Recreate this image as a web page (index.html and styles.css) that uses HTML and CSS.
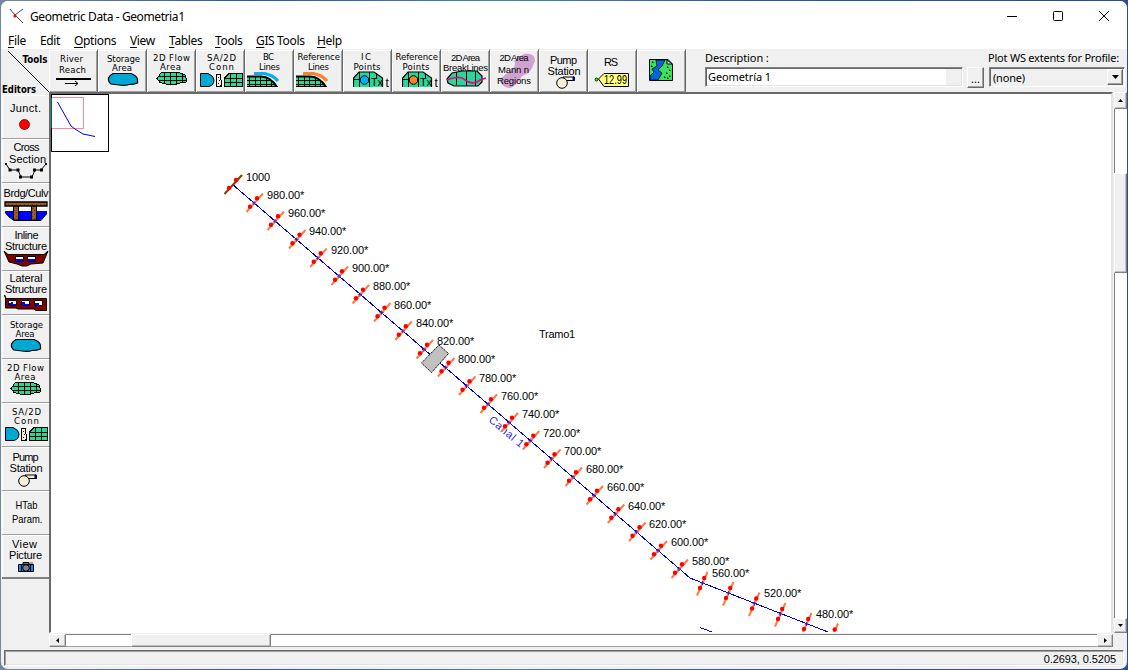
FILE: index.html
```html
<!DOCTYPE html>
<html lang="en">
<head>
<meta charset="utf-8">
<title>Geometric Data - Geometria1</title>
<link rel="stylesheet" href="styles.css">
</head>
<body>
<svg class="defs" width="0" height="0" aria-hidden="true">
  <defs>
    <pattern id="hatch" width="4" height="4" patternUnits="userSpaceOnUse"><rect width="4" height="4" fill="#a05a28"/><path d="M0 0h1v1H0zM2 2h1v1H2z" fill="#40501c"/></pattern>
    <symbol id="blob" viewBox="0 0 32 15" width="32" height="15"><path d="M6 1.5H24Q30.5 4 30.5 8V11Q27 12.5 22 12.5Q18 14 12 13L4 12Q1 10 1.5 6Q3 3 6 1.5Z" fill="#00a9d4" stroke="#000" stroke-width="1.2"/></symbol>
    <symbol id="mesh" viewBox="0 0 32 15" width="32" height="15"><g shape-rendering="crispEdges"><path d="M5 2L10 1H22L29 4L30.500 8V11L24 12L19 13.500H12L4 11.500L1 7.500Z" fill="#26d99a" stroke="#000"/><path d="M2 5.500H29M2 9.500H30M8.500 1V12M14.500 1V13M20.500 1V13M26.500 3V11" stroke="#000" fill="none"/></g></symbol>
    <symbol id="conn" viewBox="0 0 43 15" width="43" height="15"><path d="M.5.5H8Q14 3 14 7Q14 12 9 13.500H.5Z" fill="#00a9d4" stroke="#000"/><g shape-rendering="crispEdges"><path d="M16.500 1.500H20.500V6L21.500 8V13.500H16.500Z" fill="#f5efd8" stroke="#000"/><path d="M18 4.500h1M19 7.500h1M18 10.500h1M20 12.500h1" stroke="#000"/><path d="M24.500 5L29 .5H42V13.500H24.500Z" fill="#26d99a" stroke="#000"/><path d="M24 5.500H42M24 9.500H42M30.500 0V13M36.500 0V13" stroke="#000"/></g></symbol>
    <symbol id="bank" viewBox="0 0 34 16" width="34" height="16"><path d="M0 4.500H16Q25 6 30.500 14.500H0Z" fill="#26d99a"/><path d="M0 4.500H14Q24 5 29.500 14.500" fill="none" stroke="#000" stroke-width="2"/><path d="M0 8.500H24M0 12.500H29M2.500 4V15M8.500 4V15M13.500 4V15M19.500 5V15M24.500 9V15M0 14.500H31" stroke="#000" shape-rendering="crispEdges"/><path d="M7 1.500H17Q26 3 31 9" fill="none" stroke="currentColor" stroke-width="3.200"/></symbol>
    <symbol id="dome" viewBox="0 0 38 18" width="38" height="18"><path d="M.8 16V7L6 1H21L29 7V16Z" fill="#26d99a"/><path d="M.5 16V7L6 1H21L29.500 7V16" fill="none" stroke="#000" stroke-width="1.200"/><path d="M6.500 1V16M16.500 1V16M23.500 2V7M1 8.500H17" stroke="#000" shape-rendering="crispEdges"/><circle cx="11.500" cy="9" r="4.300" fill="currentColor" stroke="#000"/><text x="18" y="15" class="lbl" font-size="11" textLength="12">Tx</text><text x="32.500" y="16" class="lbl" font-size="12">t</text></symbol>
    <symbol id="pump" viewBox="0 0 20 13" width="20" height="13"><path d="M7 1H18V4.500H9Z" fill="#f5efd8" stroke="#000"/><path d="M17 1h1.500v3.500H17z" fill="#00c" stroke="#000060"/><circle cx="6" cy="7" r="5.300" fill="#f5efd8" stroke="#000"/></symbol>
    <symbol id="xs" viewBox="-10 -12 20 24" width="20" height="24" overflow="visible"><path d="M-7.500 9L9-9.500" stroke="#ff7a40" stroke-width="2"/><circle cx="-4" cy="3.700" r="2.200" fill="#f00"/><circle cx="3" cy="-4.700" r="2.200" fill="#f00"/><path d="M-2 0H2M0-2V2" stroke="#2010d0" stroke-width=".8"/></symbol>
    <symbol id="xt" viewBox="-10 -12 20 24" width="20" height="24" overflow="visible"><path d="M-5.500 12.500L5-11" stroke="#ff7a40" stroke-width="2"/><circle cx="-2.500" cy="5" r="2.200" fill="#f00"/><circle cx="1.700" cy="-5" r="2.200" fill="#f00"/><path d="M-2 0H2M0-2V2" stroke="#2010d0" stroke-width=".8"/></symbol>
  </defs>
</svg>

<div class="window">
  <header class="titlebar">
    <svg class="app-icon" width="16" height="16" viewBox="0 0 16 16"><path d="M1 1L6 7L14 15M14 1L6 7L5 8" fill="none" stroke="#444"/><circle cx="6" cy="8" r="1.600" fill="#f00"/></svg>
    <h1 class="title">Geometric Data - Geometria1</h1>
    <div class="win-controls">
      <svg width="12" height="12"><path d="M1 6.500H11" stroke="#000"/></svg>
      <svg width="12" height="12"><rect x="1.500" y="1.500" width="9" height="9" rx="1" fill="none" stroke="#000"/></svg>
      <svg width="12" height="12"><path d="M1 1L11 11M11 1L1 11" stroke="#000"/></svg>
    </div>
  </header>

  <nav class="menu">
    <span><u>F</u>ile</span><span>Edit</span><span><u>O</u>ptions</span><span><u>V</u>iew</span><span><u>T</u>ables</span><span><u>T</u>ools</span><span><u>G</u>IS Tools</span><span><u>H</u>elp</span>
  </nav>

  <section class="toolbar">
    <svg class="corner" viewBox="1 49 48 46" width="48" height="46"><path d="M8 51L49 92" stroke="#000"/><text x="22.500" y="63" textLength="25" class="bold" lengthAdjust="spacingAndGlyphs">Tools</text><text x="2" y="93" textLength="34" class="bold" lengthAdjust="spacingAndGlyphs">Editors</text></svg>
    <div class="tools">
      <button class="tool"><svg viewBox="49 49 49 43"><text x="60" y="62" textLength="23">River</text><text x="59" y="73" textLength="27">Reach</text><path d="M56 79H91" stroke="#000" stroke-width="2"/><path d="M65 83.500H78M75 81L78 83.500L75 86" stroke="#000" fill="none"/></svg></button>
      <button class="tool"><svg viewBox="98 49 49 43"><text x="107" y="61.500" textLength="33">Storage</text><text x="112" y="70.500" textLength="20">Area</text><use href="#blob" x="107" y="72"/></svg></button>
      <button class="tool"><svg viewBox="147 49 49 43"><text x="153" y="61" textLength="37">2D Flow</text><text x="160" y="69.500" textLength="21">Area</text><use href="#mesh" x="156" y="71"/></svg></button>
      <button class="tool"><svg viewBox="196 49 49 43"><text x="207" y="61" textLength="29">SA/2D</text><text x="209" y="70" textLength="25">Conn</text><use href="#conn" x="200" y="73"/></svg></button>
      <button class="tool"><svg viewBox="245 49 49 43"><text x="263" y="60" textLength="11">BC</text><text x="259" y="70" textLength="21">Lines</text><use href="#bank" x="247" y="72" color="#00b0f8"/></svg></button>
      <button class="tool"><svg viewBox="294 49 49 43"><text x="297.500" y="60" textLength="42.500">Reference</text><text x="308" y="70" textLength="21">Lines</text><use href="#bank" x="296" y="72" color="#ff7f27"/></svg></button>
      <button class="tool"><svg viewBox="343 49 49 43"><text x="361" y="60" textLength="10">IC</text><text x="353.500" y="70" textLength="27">Points</text><use href="#dome" x="353" y="71" color="#00b0f8"/></svg></button>
      <button class="tool"><svg viewBox="392 49 49 43"><text x="395.500" y="60" textLength="42.500">Reference</text><text x="402.500" y="70" textLength="27">Points</text><use href="#dome" x="402" y="71" color="#ff7f27"/></svg></button>
      <button class="tool sans"><svg viewBox="441 49 49 43"><path d="M447 79L452 73L462 71H477L482 76V82L478 86H454L448 83Z" fill="#26d99a" stroke="#000" stroke-width="1.200"/><path d="M456.500 72V85M466.500 71V86M475.500 71V86" stroke="#000" shape-rendering="crispEdges"/><text x="451" y="61" textLength="29">2D Area</text><text x="443" y="70.500" textLength="45">BreakLines</text><path d="M447 80L453 78Q461 76 465 80Q473 86 480 80L486 78" fill="none" stroke="#f0047f" stroke-width="1.700"/></svg></button>
      <button class="tool sans"><svg viewBox="490 49 49 43"><path d="M524 54Q535 52 535 61L532 68Q530 73 522 76Q517 86 510 88Q503 88 499 80L506 74Q518 67 514 61Q518 57 524 54Z" fill="#d0a2d0"/><text x="499.500" y="61" textLength="29">2D Area</text><text x="498" y="72.500" textLength="31">Mann n</text><text x="497" y="84" textLength="34">Regions</text></svg></button>
      <button class="tool sans big"><svg viewBox="539 49 49 43"><text x="550" y="63.500" textLength="27">Pump</text><text x="547.500" y="74.500" textLength="33">Station</text><use href="#pump" x="556" y="76"/></svg></button>
      <button class="tool sans big"><svg viewBox="588 49 49 43"><text x="604" y="66" textLength="14">RS</text><path d="M598.500 79L604 73.500H628.500V86.500H604Z" fill="#ffff80" stroke="#000"/><circle cx="596.500" cy="79.500" r="1.500" fill="#2e4" stroke="#000" stroke-width=".8"/><text x="604" y="83.500" textLength="23" font-size="12" lengthAdjust="spacingAndGlyphs">12.99</text></svg></button>
      <button class="tool"><svg viewBox="637 49 49 43"><path d="M649.500 59.500H668L672.500 64V80.500H649.500Z" fill="#3de05c" stroke="#000"/><path d="M656 60H665L662 66L658 70L662 73L658 80H650V76L654 72L652 69L657 66Z" fill="#0067e0" stroke="#000" stroke-width=".8"/><path d="M667 60V64H672Z" fill="#fff" stroke="#000"/><path d="M652 62h1v1M651 66h1v1M667 67h1v1M669 70h1v1M666 73h1v1M664 77h1v1M669 76h1v1M667 78h1v1" stroke="#000"/></svg></button>
    </div>
    <div class="field desc">
      <label>Description :</label>
      <div class="row"><div class="input"><span>Geometría 1</span></div><button class="dots">...</button></div>
    </div>
    <div class="field profile">
      <label>Plot WS extents for Profile:</label>
      <div class="select"><span>(none)</span><i class="drop"><svg width="7" height="4"><path d="M0 0H7L3.500 4Z"/></svg></i></div>
    </div>
  </section>

  <main class="body">
    <aside class="editors">
      <button class="editor"><svg viewBox="2 95 47 44"><text x="10" y="112" textLength="31">Junct.</text><circle cx="24.500" cy="124.500" r="5" fill="#f00" stroke="#600" stroke-width=".8"/></svg></button>
      <button class="editor"><svg viewBox="2 139 47 44"><text x="13.500" y="151" textLength="26">Cross</text><text x="9" y="163" textLength="37">Section</text><path d="M6 164L10 170H18L21 177H32L35 170H41L46 164" fill="none" stroke="#000"/><path d="M5 163h2v2H5zM8.500 168.500h3v3h-3zM16.500 168.500h3v3h-3zM19 175.500h3v3h-3zM30 175.500h3v3h-3zM33 168.500h3v3h-3zM40 168.500h3v3h-3zM45 163h2v2h-2z"/></svg></button>
      <button class="editor"><svg viewBox="2 183 47 44"><text x="3.500" y="197" textLength="45">Brdg/Culv</text><path d="M6 206H46V211H6Z" fill="#fff"/><path d="M5 211H47V214L41 220H14L8 216L5 213Z" fill="#00f"/><path d="M5 212L9 217L14 220.500H41L47 213" fill="none" stroke="#000"/><path d="M13.500 206H18.500V220H13.500ZM31.500 206H36.500V220H31.500Z" fill="url(#hatch)" stroke="#000"/><path d="M5 202H47V206H5Z" fill="url(#hatch)" stroke="#000" stroke-width="1.300"/></svg></button>
      <button class="editor"><svg viewBox="2 227 47 44"><text x="14.500" y="238.500" textLength="24">Inline</text><text x="5" y="249.500" textLength="42">Structure</text><path d="M4 251L8 254.500H44L48 251L43 263L31 264L27 266H22L17 264L9 262Z" fill="#800000" stroke="#000"/><path d="M15.500 256.500h8v5h-8zM27.500 256.500h8v5h-8z" fill="#fff" stroke="#000"/><path d="M16 259h7v2.500h-7zM28 259h7v2.500h-7z" fill="#00f"/></svg></button>
      <button class="editor"><svg viewBox="2 271 47 44"><text x="9.500" y="282" textLength="33">Lateral</text><text x="5" y="292.500" textLength="42">Structure</text><path d="M4.500 295L6 298.500H46.500V310.500H36L34 309H18L16 308H5.500V298Z" fill="#800000" stroke="#000"/><path d="M8.500 300.500h8v5h-8zM21.500 300.500h8v5h-8zM34.500 300.500h8v5h-8z" fill="#fff" stroke="#000"/><path d="M9 303h2v-1h2v2h3v1H9zM22 302h3v2h4v1.500h-7zM35 303h4v2h3v.500h-7z" fill="#00f"/></svg></button>
      <button class="editor tah"><svg viewBox="2 315 47 44"><text x="10" y="327.500" textLength="33">Storage</text><text x="15.500" y="336.500" textLength="19">Area</text><use href="#blob" x="10" y="338"/></svg></button>
      <button class="editor tah"><svg viewBox="2 359 47 44"><text x="7" y="371" textLength="37">2D Flow</text><text x="14.500" y="379.500" textLength="21">Area</text><use href="#mesh" x="10" y="381"/></svg></button>
      <button class="editor tah"><svg viewBox="2 403 47 44"><text x="12" y="415" textLength="29">SA/2D</text><text x="14" y="424" textLength="25">Conn</text><use href="#conn" x="5" y="427"/></svg></button>
      <button class="editor"><svg viewBox="2 447 47 44"><text x="12.500" y="461" textLength="26">Pump</text><text x="9.500" y="472" textLength="33">Station</text><use href="#pump" x="18" y="474"/></svg></button>
      <button class="editor"><svg viewBox="2 491 47 44"><text x="15.500" y="509" textLength="22" lengthAdjust="spacingAndGlyphs">HTab</text><text x="12" y="523" textLength="30.500" lengthAdjust="spacingAndGlyphs">Param.</text></svg></button>
      <button class="editor"><svg viewBox="2 535 47 44"><text x="12" y="548" textLength="25">View</text><text x="9" y="559" textLength="33">Picture</text><path d="M18.500 564.500H33.500V571.500H18.500Z" fill="#1684ff" stroke="#000"/><path d="M23 562.500H29V564H23ZM21.500 564V571M30.500 564V571" fill="#ddd" stroke="#000"/><circle cx="26" cy="568" r="3.300" fill="#808080" stroke="#000"/><path d="M30 563h3" stroke="#f00"/></svg></button>
    </aside>

    <div class="view">
      <svg class="canvas" viewBox="51 94 1061 538" width="1061" height="538">
        <g fill="none" stroke="#0000e8" stroke-width="1" shape-rendering="crispEdges"><path d="M232 184L690 578L828 632M700 627.500L712 632"/></g>
        <text class="river" transform="translate(488 421) rotate(40)" textLength="42">Canal 1</text>
        <path d="M439 345L448.500 353.500L431.500 372.500L421.500 363Z" fill="#c0c0c0" stroke="#000" stroke-dasharray="1.500 .7"/>
        <path d="M224.500 194L242 175" stroke="#804000" stroke-width="2"/><circle cx="229" cy="188" r="2.200" fill="#f00"/><circle cx="236" cy="180" r="2.200" fill="#f00"/>
        <g>
          <use href="#xs" x="244" y="191"/><use href="#xs" x="265" y="209"/><use href="#xs" x="286.500" y="227.500"/><use href="#xs" x="307.700" y="246"/><use href="#xs" x="329" y="264"/><use href="#xs" x="350" y="282.500"/><use href="#xs" x="371.500" y="300.500"/><use href="#xs" x="392.800" y="319"/><use href="#xs" x="414" y="337.500"/><use href="#xs" x="435.500" y="355.500"/><use href="#xs" x="456.500" y="374"/><use href="#xs" x="478" y="392"/><use href="#xs" x="499" y="410.500"/><use href="#xs" x="520.300" y="428.500"/><use href="#xs" x="541.500" y="447"/><use href="#xs" x="563" y="465"/><use href="#xs" x="584" y="483.500"/><use href="#xs" x="605.300" y="502"/><use href="#xs" x="626.500" y="520"/><use href="#xs" x="648" y="538.500"/><use href="#xs" x="669" y="557"/>
          <use href="#xt" x="692.500" y="571"/><use href="#xt" x="718.500" y="581"/><use href="#xt" x="744.500" y="591.500"/><use href="#xt" x="770.500" y="602"/><use href="#xt" x="796.500" y="612"/><use href="#xt" x="823" y="622.500"/>
        </g>
        <g class="stations">
          <text x="246" y="181">1000</text><text x="267" y="199">980.00*</text><text x="288" y="217">960.00*</text><text x="309" y="235">940.00*</text><text x="331" y="254">920.00*</text><text x="352" y="272">900.00*</text><text x="373" y="290">880.00*</text><text x="394" y="309">860.00*</text><text x="416" y="327">840.00*</text><text x="437" y="345">820.00*</text><text x="458" y="363">800.00*</text><text x="479" y="382">780.00*</text><text x="501" y="400">760.00*</text><text x="522" y="418">740.00*</text><text x="543" y="437">720.00*</text><text x="564" y="455">700.00*</text><text x="586" y="473">680.00*</text><text x="607" y="491">660.00*</text><text x="628" y="510">640.00*</text><text x="649" y="528">620.00*</text><text x="671" y="546">600.00*</text><text x="692" y="565">580.00*</text><text x="712" y="577">560.00*</text><text x="764" y="597">520.00*</text><text x="816" y="618">480.00*</text>
          <text x="539" y="338" textLength="36">Tramo1</text>
        </g>
        <rect x="51.500" y="94.500" width="57" height="57" fill="#fff" stroke="#000"/>
        <path d="M52 97.500H83.500V128.500H52" fill="none" stroke="#f88"/><path d="M51.500 98V128" stroke="#006060"/>
        <path d="M57.500 102L71 126L75 129L83 134L88 135L95 136.500" fill="none" stroke="#0000e8"/>
      </svg>
    </div>

    <div class="vscroll"><i class="sb up"><svg width="5" height="3"><path d="M0 3L2.500 0L5 3Z"/></svg></i><i class="track a"></i><i class="sb vthumb"></i><i class="track b"></i><i class="sb down"><svg width="5" height="3"><path d="M0 0H5L2.500 3Z"/></svg></i></div>
    <div class="hscroll"><i class="sb left"><svg width="3" height="5"><path d="M3 0V5L0 2.500Z"/></svg></i><i class="track c"></i><i class="sb hthumb"></i><i class="track d"></i><i class="sb right"><svg width="3" height="5"><path d="M0 0V5L3 2.500Z"/></svg></i></div>
  </main>

  <footer class="status"><span>0.2693, 0.5205</span></footer>
</div>
</body>
</html>
```
FILE: styles.css
```css
* { box-sizing: border-box; }
body {
  margin: 0;
  width: 1128px;
  height: 670px;
  padding: 1px 1px 1px 1px;
  overflow: hidden;
  background: linear-gradient(90deg, #74879b 0, #74879b 4px, #2c55ac 250px, #3f86ac 500px, #2c55ac 750px, #2b4c90 1128px);
  font-family: "Noto Sans", sans-serif;
  color: #000;
}
.defs { position: absolute; }
.window {
  width: 1126px;
  height: 668px;
  display: flex;
  flex-direction: column;
  background: #f0f0f0;
  border-radius: 7px;
  overflow: hidden;
}
svg { display: block; }
button { margin: 0; padding: 0; font: inherit; color: inherit; background: #f0f0f0; border: 0; }
.titlebar { height: 30px; display: flex; align-items: center; padding: 0 17px 0 8px; background: #fff; }
.title { margin: 0 auto 0 5px; font-weight: 400; font-size: 12px; letter-spacing: -.4px; white-space: nowrap; }
.win-controls { display: flex; gap: 34px; }
.menu { height: 18px; display: flex; gap: 14px; padding-left: 7px; background: #fff; font-size: 12px; line-height: 20px; letter-spacing: -.35px; white-space: nowrap; }
.menu u { text-underline-offset: 2px; }
.menu span:nth-child(1) { width: 18px; }
.menu span:nth-child(2) { width: 20px; }
.menu span:nth-child(3) { width: 42px; }
.menu span:nth-child(4) { width: 25px; }
.menu span:nth-child(5) { width: 32px; }
.menu span:nth-child(6) { width: 27px; }
.menu span:nth-child(7) { width: 47px; }

.toolbar { height: 43px; display: flex; }
.corner { width: 48px; overflow: visible; }
.lbl { font-family: "Liberation Sans", Arial, sans-serif; fill: #000; }
.bold { font-family: "DejaVu Sans", sans-serif; font-weight: 700; font-size: 10.5px; }
.tools { display: flex; }
.tool { width: 49px; height: 43px; border-top: 1px solid #f0f0f0; box-shadow: inset 1px 1px #fff, inset -1px -1px #a0a0a0; border-right: 1px solid #696969; overflow: hidden; }
.tool svg { width: 49px; height: 43px; margin-top: -1px; font-family: "DejaVu Sans Condensed", "DejaVu Sans", sans-serif; font-stretch: condensed; font-size: 9.5px; }
.tool.sans svg { font-family: "Liberation Sans", Arial, sans-serif; font-stretch: normal; font-size: 9.5px; }
.tool.big svg { font-size: 11px; }
.field { font-size: 11px; line-height: 15px; white-space: nowrap; }
.field label { display: block; height: 17px; padding-top: 1px; letter-spacing: -.1px; }
.desc { width: 279px; margin-left: 19px; }
.profile { margin-left: 5px; }
.profile label { margin-left: -1px; letter-spacing: -.22px; }
.row { display: flex; justify-content: space-between; }
.input { width: 258px; height: 20px; margin-top: 1px; border: 1px solid; border-color: #808080 #fff #fff #808080; box-shadow: inset 1px 1px #696969, inset -1px -1px #e3e3e3; background: linear-gradient(90deg, #fff 240px, #f0f0f0 240px); padding: 1px 2px; line-height: 16px; letter-spacing: -.1px; }
.dots { width: 17px; height: 21px; margin-top: 1px; border: 1px solid; border-color: #fff #696969 #696969 #fff; box-shadow: inset -1px -1px #a0a0a0; line-height: 22px; }
.select { width: 136px; height: 20px; margin-top: 1px; display: flex; justify-content: space-between; border: 1px solid; border-color: #808080 #fff #fff #808080; box-shadow: inset 1px 1px #696969; padding: 1px 1px 1px 3px; line-height: 18px; letter-spacing: -.2px; }
.drop { width: 16px; height: 16px; display: flex; align-items: center; justify-content: center; border: 1px solid; border-color: #fff #696969 #696969 #fff; box-shadow: inset -1px -1px #a0a0a0; }

.body { height: 555px; display: grid; grid-template-columns: 48px 1064px 14px; grid-template-rows: 541px 14px; }
.editors { grid-row: 1 / 3; padding: 3px 0 0 1px; }
.editor { display: block; width: 48px; height: 44px; box-shadow: inset 1px 1px #fff; border-right: 1px solid #a0a0a0; border-bottom: 1px solid #a0a0a0; overflow: hidden; }
.editor:last-child { border-bottom: 2px solid #808080; }
.editor svg { width: 47px; height: 44px; font-family: "Liberation Sans", Arial, sans-serif; font-size: 11px; }
.editor.tah svg { font-family: "DejaVu Sans Condensed", "DejaVu Sans", sans-serif; font-stretch: condensed; font-size: 9.5px; }
.view { border: 1px solid; border-color: #808080 #fff #fff #808080; border-width: 2px 2px 1px 2px; border-top-color: #696969; border-left-color: #696969; border-right-color: #e3e3e3; background: #fff; width: 1064px; height: 541px; }
.canvas { overflow: hidden; }
.stations { font-family: "Liberation Sans", Arial, sans-serif; font-size: 11px; letter-spacing: -.1px; }
.river { font-family: "Liberation Sans", Arial, sans-serif; font-size: 11px; fill: #2418e8; }

.sb { display: flex; align-items: center; justify-content: center; background: #f0f0f0; border: 1px solid; border-color: #fff #808080 #808080 #fff; box-shadow: inset -1px -1px #c0c0c0; }
.track { display: block; background: #fff; }
.vscroll { display: flex; flex-direction: column; padding-left: 1px; }
.vscroll .track { border-left: 1px solid #808080; }
.up { height: 17px; }
.a { height: 64px; }
.vthumb { height: 100px; }
.b { flex: 1; }
.down { height: 15px; }
.hscroll { grid-column: 2; display: flex; padding-top: 1px; }
.hscroll .track { border-top: 1px solid #808080; border-bottom: 1px solid #a0a0a0; }
.left { width: 17px; }
.c { width: 65px; }
.hthumb { width: 140px; }
.d { flex: 1; }
.right { width: 16px; }
.status { margin: 3px 3px 0; height: 16px; border: 1px solid; border-color: #696969 #fff #fff #696969; box-shadow: inset 1px 1px #a0a0a0, inset -1px -1px #e3e3e3; display: flex; align-items: center; justify-content: flex-end; padding: 2px 7px 0 0; font-family: "Liberation Sans", Arial, sans-serif; font-size: 11px; letter-spacing: -.08px; white-space: nowrap; }
```
